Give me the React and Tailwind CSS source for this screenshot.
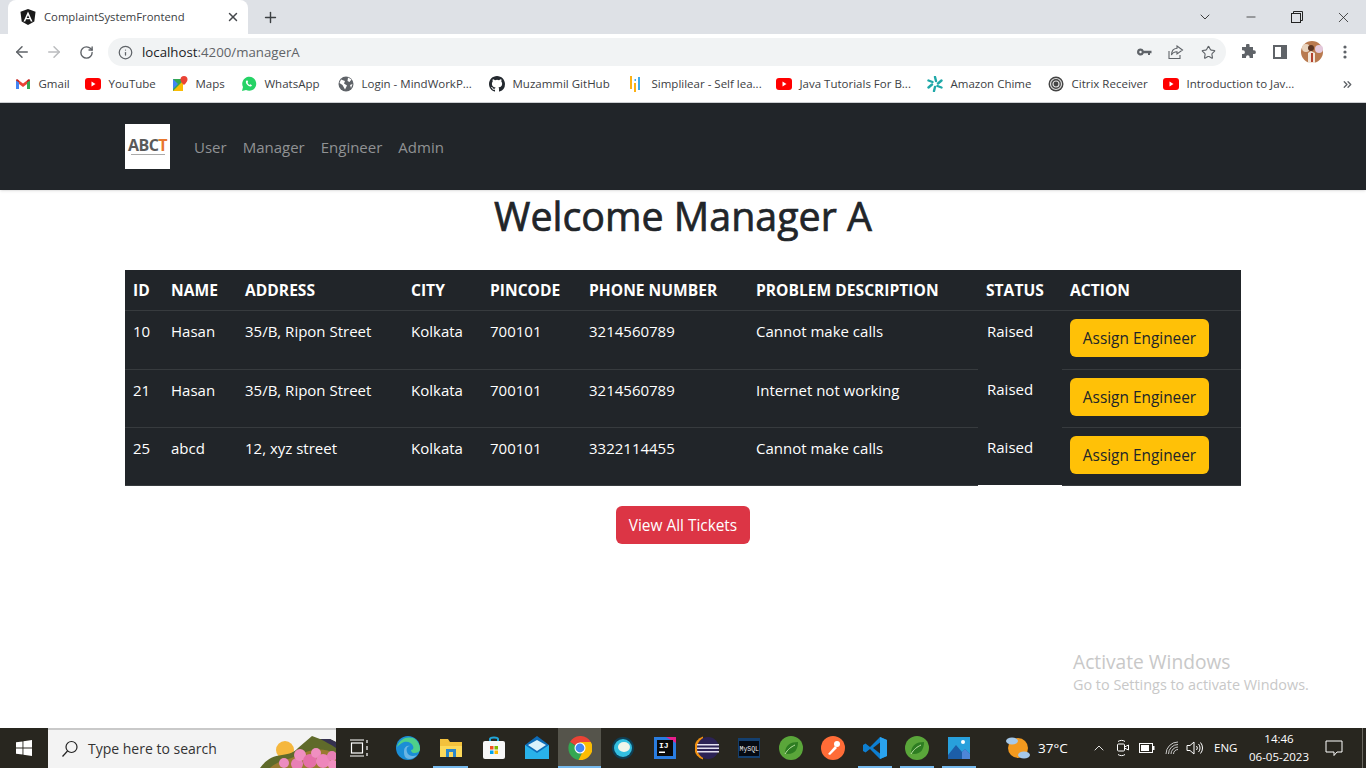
import { ArrowLeft, ArrowRight, RotateCw, Info, Star, X, Plus, ChevronDown, Minus, ChevronUp, ChevronsRight } from "lucide-react";

const font = "font-['Open_Sans',sans-serif]";

function Youtube() {
  return (
    <svg width="16" height="16" viewBox="0 0 16 16">
      <rect y="2" width="16" height="12" rx="3" fill="#f00" />
      <path d="M6.500 5.500v5l4-2.500z" fill="#fff" />
    </svg>
  );
}
function Gmail() {
  return (
    <svg width="16" height="16" viewBox="0 0 16 16">
      <path d="M1 13V4l3 2v7z" fill="#4285f4" />
      <path d="M15 13V4l-3 2v7z" fill="#34a853" />
      <path d="M4 8V4.500l4 3 4-3V8L8 11z" fill="#ea4335" />
      <path d="M1 4.500C1 3 2.500 2.500 4 4.500V6.500zM15 4.500C15 3 13.500 2.500 12 4.500V6.500z" fill="#c5221f" />
    </svg>
  );
}
function Maps() {
  return (
    <svg width="16" height="16" viewBox="0 0 16 16">
      <path d="M1 3h10v12H1z" fill="#34a853" />
      <path d="M1 15 11 5v10z" fill="#fbbc04" />
      <path d="M1 3l5 5-5 5z" fill="#4285f4" />
      <path d="M12 0a3.500 3.500 0 0 0-3.500 3.500C8.500 6 12 9 12 9s3.500-3 3.500-5.500A3.500 3.500 0 0 0 12 0z" fill="#ea4335" />
    </svg>
  );
}
function Whatsapp() {
  return (
    <svg width="16" height="16" viewBox="0 0 16 16">
      <path d="M1 15l1-4a7 7 0 1 1 3 3z" fill="#25d366" />
      <path d="M5.500 4.500c-1 1-.8 2.500.5 4s3 2.500 4.300 1.800l.7-1-1.700-1-.8.700C7.500 8.500 6.800 7.700 6.500 6.800l.7-.8-.7-1.500z" fill="#fff" />
    </svg>
  );
}
function Globe() {
  return (
    <svg width="16" height="16" viewBox="0 0 16 16">
      <circle cx="8" cy="8" r="7.500" fill="#5f6368" />
      <path d="M3 3.500 7 5 6 7.500l3 2-2 4L4.500 9 1.500 7zM10 1.500l3.500 2-2 2.500-2-1zM12 9l2.500-1-1.500 4z" fill="#fff" />
    </svg>
  );
}
function Github() {
  return (
    <svg width="16" height="16" viewBox="0 0 16 16" fill="#24292f">
      <path d="M8 0C3.580 0 0 3.580 0 8c0 3.540 2.290 6.530 5.470 7.590.4.070.55-.17.55-.38 0-.19-.01-.82-.01-1.490-2.010.37-2.530-.49-2.690-.94-.09-.23-.48-.94-.82-1.130-.28-.15-.68-.52-.01-.53.63-.01 1.080.58 1.230.82.720 1.210 1.870.87 2.330.66.070-.52.280-.87.510-1.070-1.780-.2-3.640-.89-3.640-3.950 0-.87.310-1.590.820-2.150-.08-.2-.36-1.020.080-2.120 0 0 .67-.21 2.200.82a7.600 7.600 0 0 1 4 0c1.530-1.040 2.200-.82 2.200-.82.440 1.100.160 1.920.080 2.120.510.560.820 1.270.820 2.150 0 3.070-1.870 3.750-3.650 3.950.290.250.540.730.540 1.480 0 1.070-.01 1.930-.01 2.200 0 .210.150.460.550.380A8.010 8.010 0 0 0 16 8c0-4.420-3.580-8-8-8z" />
    </svg>
  );
}
function Simplilear() {
  return (
    <svg width="16" height="16" viewBox="0 0 16 16">
      <rect x="2" y="0" width="2" height="13" fill="#fbb116" />
      <rect x="6" y="7" width="2" height="9" fill="#fbb116" />
      <rect x="6.500" y="3" width="1.500" height="2" fill="#3ea9e8" />
      <rect x="10" y="1" width="2" height="13" fill="#3ea9e8" />
    </svg>
  );
}
function Chime() {
  return (
    <svg width="16" height="16" viewBox="0 0 16 16" fill="none" stroke="#1fa8a8" strokeWidth="2.400" strokeLinecap="round">
      <path d="M8 1l1 4M8 11l-1 4M1.500 4.500 5.500 6M10.500 10l4 1.500M1.500 11.500 5 8.500M11 7.500l3.500-3" />
    </svg>
  );
}
function Citrix() {
  return (
    <svg width="16" height="16" viewBox="0 0 16 16" fill="none">
      <circle cx="8" cy="8" r="7.500" fill="#444" />
      <circle cx="8" cy="8" r="5.500" stroke="#ddd" strokeWidth="1.200" />
      <circle cx="8" cy="8" r="3" stroke="#ddd" strokeWidth="1.200" />
    </svg>
  );
}

const bookmarks = [
  { label: "Gmail", icon: <Gmail />, w: 70 },
  { label: "YouTube", icon: <Youtube />, w: 87 },
  { label: "Maps", icon: <Maps />, w: 69 },
  { label: "WhatsApp", icon: <Whatsapp />, w: 97 },
  { label: "Login - MindWorkP...", icon: <Globe />, w: 151 },
  { label: "Muzammil GitHub", icon: <Github />, w: 139 },
  { label: "Simplilear - Self lea...", icon: <Simplilear />, w: 148 },
  { label: "Java Tutorials For B...", icon: <Youtube />, w: 151 },
  { label: "Amazon Chime", icon: <Chime />, w: 121 },
  { label: "Citrix Receiver", icon: <Citrix />, w: 115 },
  { label: "Introduction to Jav...", icon: <Youtube />, w: 165 },
];

const tickets = [
  { id: 10, name: "Hasan", address: "35/B, Ripon Street", phone: "3214560789", problem: "Cannot make calls", h: "h-[59px]" },
  { id: 21, name: "Hasan", address: "35/B, Ripon Street", phone: "3214560789", problem: "Internet not working", h: "h-[58px]" },
  { id: 25, name: "abcd", address: "12, xyz street", phone: "3322114455", problem: "Cannot make calls", h: "h-[58px]" },
];

const headers = ["ID", "NAME", "ADDRESS", "CITY", "PINCODE", "PHONE NUMBER", "PROBLEM DESCRIPTION", "STATUS", "ACTION"];
const colWidths = ["w-[38px]", "w-[74px]", "w-[166px]", "w-[79px]", "w-[99px]", "w-[167px]", "w-[230px]", "w-[84px]", "w-[179px]"];

function TabStrip() {
  return (
    <div className="flex h-[34px] items-stretch bg-[#dee1e6] pl-2">
      <div className="flex w-[240px] items-center rounded-t-lg bg-white pl-3 pr-2">
        <svg width="16" height="16" viewBox="0 0 16 16">
          <path d="M8 0 .5 2.700l1.200 9.900L8 16l6.300-3.400 1.200-9.900z" fill="#1a1a1a" />
          <path d="M8 2.500 3.500 12.500h1.700l.9-2.300h3.800l.9 2.300h1.700zM8 6.200l1.300 2.800H6.700z" fill="#fff" />
        </svg>
        <span className="ml-2 flex-1 text-[11.300px] text-[#3c4043]">ComplaintSystemFrontend</span>
        <X size={14} strokeWidth={2.500} className="text-[#45484c]" />
      </div>
      <div className="ml-[14px] flex items-center">
        <Plus size={17} strokeWidth={2} className="text-[#3c4043]" />
      </div>
      <div className="ml-auto flex items-center text-[#222]">
        <div className="flex w-[46px] justify-center"><ChevronDown size={16} strokeWidth={1.300} /></div>
        <div className="flex w-[46px] justify-center"><Minus size={14} strokeWidth={1.300} /></div>
        <div className="flex w-[46px] justify-center">
          <svg width="12" height="12" viewBox="0 0 12 12" fill="none" stroke="#222" strokeWidth="1">
            <rect x=".5" y="2.500" width="9" height="9" />
            <path d="M2.500 2.500V.5h9v9h-2" />
          </svg>
        </div>
        <div className="flex w-[46px] justify-center"><X size={17} strokeWidth={1.100} /></div>
      </div>
    </div>
  );
}

function Toolbar() {
  return (
    <div className="flex h-[32px] items-end bg-white">
      <div className="flex h-[28px] w-[108px] items-center pl-[6px] text-[#5f6368]">
        <div className="flex w-[32px] justify-center"><ArrowLeft size={18} strokeWidth={2} /></div>
        <div className="flex w-[32px] justify-center text-[#babcbe]"><ArrowRight size={18} strokeWidth={2} /></div>
        <div className="flex w-[32px] justify-center"><RotateCw size={15} strokeWidth={2.200} /></div>
      </div>
      <div className="flex h-[28px] w-[1118px] items-center rounded-full bg-[#f1f3f4] pl-[10px] pr-[2px]">
        <Info size={15} strokeWidth={2} className="text-[#5f6368]" />
        <span className="ml-[9px] flex-1 pt-px text-[13.250px] text-[#5f6368]"><span className="text-[#202124]">localhost</span>:4200/managerA</span>
        <div className="flex items-center text-[#5f6368]">
          <div className="flex w-[32px] justify-center">
            <svg width="16" height="16" viewBox="0 0 16 16" fill="#5f6368">
              <path d="M4.500 4.500a3.500 3.500 0 0 1 3.300 2.300H15.500v2.500H14v1.800h-2V9.300H7.800a3.500 3.500 0 1 1-3.300-4.800zm0 2.300a1.200 1.200 0 1 0 0 2.400 1.200 1.200 0 0 0 0-2.400z" />
            </svg>
          </div>
          <div className="flex w-[32px] justify-center">
            <svg width="16" height="16" viewBox="0 0 16 16" fill="none" stroke="#5f6368" strokeWidth="1.100">
              <path d="M1 7v7.500h11V11M9 2l5.500 4L9 10V7.800C6.500 7.800 4.500 8.800 3.500 11c0-4 2-6.500 5.500-6.800z" />
            </svg>
          </div>
          <div className="flex w-[32px] justify-center"><Star size={15} strokeWidth={1.800} /></div>
        </div>
      </div>
      <div className="flex h-[28px] flex-1 items-center pl-[6px]">
        <div className="flex w-[32px] justify-center">
          <svg width="16" height="16" viewBox="0 0 16 16" fill="#5f6368">
            <path d="M6 1.500a1.800 1.800 0 0 1 3.600 0V3h3.400v3.300h1a1.900 1.900 0 0 1 0 3.800h-1V14H9.600v-1a1.800 1.800 0 0 0-3.600 0v1H2v-3.900h1a1.900 1.900 0 0 0 0-3.800H2V3h4z" />
          </svg>
        </div>
        <div className="flex w-[32px] justify-center">
          <svg width="14" height="14" viewBox="0 0 14 14" fill="none">
            <rect x="1" y="1" width="12" height="12" stroke="#5f6368" strokeWidth="2" />
            <rect x="8" y="1" width="5" height="12" fill="#5f6368" />
          </svg>
        </div>
        <div className="flex w-[32px] justify-center">
          <svg width="22" height="22" viewBox="0 0 22 22">
            <circle cx="11" cy="11" r="11" fill="#b97a4f" />
            <circle cx="5" cy="7" r="4" fill="#e9d3bd" />
            <circle cx="18" cy="8" r="4" fill="#e4c9dc" />
            <circle cx="10" cy="7" r="3" fill="#5b3522" />
            <path d="M7 22V12l3-2 4 2v10z" fill="#f1e6da" />
            <path d="M10 12h2v9h-2z" fill="#b5432f" />
          </svg>
        </div>
        <div className="flex w-[34px] justify-center">
          <svg width="4" height="14" viewBox="0 0 4 14" fill="#5f6368">
            <circle cx="2" cy="2" r="1.600" /><circle cx="2" cy="7" r="1.600" /><circle cx="2" cy="12" r="1.600" />
          </svg>
        </div>
      </div>
    </div>
  );
}

function BookmarkBar() {
  return (
    <div className="flex h-[37px] items-center border-b border-[#d0d2d5] bg-white pl-[15px]">
      {bookmarks.map((b) => (
        <div key={b.label} style={{ width: b.w }} className="flex shrink-0 items-center gap-[7.500px]">
          <span className="flex w-[16px] justify-center">{b.icon}</span>
          <span className="whitespace-nowrap text-[11.500px] text-[#3c4043]">{b.label}</span>
        </div>
      ))}
      <ChevronsRight size={13} strokeWidth={2.500} className="ml-[13px] text-[#5f6368]" />
    </div>
  );
}

function Navbar() {
  return (
    <nav className="flex h-[87px] items-center bg-[#212529] pl-[125px] shadow-sm">
      <div className="flex h-[45px] w-[45px] flex-col items-center justify-center bg-white">
        <span className="text-[16px] font-bold leading-[15px] tracking-[-0.5px] text-[#5a5a5a]">ABC<span className="text-[#e8772e]">T</span></span>
        <span className="mt-[1px] h-px w-[34px] bg-[#aaa]" />
      </div>
      <div className="ml-[24px] flex gap-4 pt-px text-[15px] text-[#909294]">
        <a>User</a>
        <a>Manager</a>
        <a>Engineer</a>
        <a>Admin</a>
      </div>
    </nav>
  );
}

function TicketTable() {
  return (
    <table className="ml-[125px] mt-[30px] w-[1116px] table-fixed border-separate border-spacing-0 text-left text-[15px] leading-[24px] text-white">
      <colgroup>
        {colWidths.map((w) => <col key={w} className={w} />)}
      </colgroup>
      <thead>
        <tr className="h-[41px] bg-[#212529]">
          {headers.map((h) => (
            <th key={h} className="whitespace-nowrap border-b border-[#373b3e] px-2 text-[15.600px] font-bold">{h}</th>
          ))}
        </tr>
      </thead>
      <tbody>
        {tickets.map((t, i) => (
          <tr key={t.id} className={t.h}>
            {[t.id, t.name, t.address, "Kolkata", "700101", t.phone, t.problem].map((v, j) => (
              <td key={j} className="whitespace-nowrap border-b border-[#373b3e] bg-[#212529] px-2 pb-[18px] pt-2 align-top">{v}</td>
            ))}
            <td className={`${i === 2 ? "border-b border-white" : ""} ${i === 0 ? "pt-2" : "pt-[7px]"} bg-[#212529] pl-[9px] align-top`}>Raised</td>
            <td className="border-b border-[#373b3e] bg-[#212529] px-2 pt-2 align-top">
              <button className="h-[38px] w-[139px] whitespace-nowrap rounded-md bg-[#ffc107] pt-px text-[15.400px] text-[#212529]">Assign Engineer</button>
            </td>
          </tr>
        ))}
      </tbody>
    </table>
  );
}

function TaskIcon({ children, active, running, w = "w-[42px]" }) {
  return (
    <div className={`relative flex shrink-0 items-center justify-center ${w} ${active ? "bg-[#55544b]" : ""}`}>
      {children}
      {active && <span className="absolute inset-x-0 bottom-0 h-[2px] bg-[#76b9ed]" />}
      {running && <span className="absolute inset-x-[4px] bottom-0 h-[2px] bg-[#76b9ed]" />}
    </div>
  );
}

function Spring() {
  return (
    <svg width="24" height="24" viewBox="0 0 24 24">
      <circle cx="12" cy="12" r="12" fill="#5aa63a" />
      <path d="M6 17C6 9 12 6 19 6c0 7-3 12-10 12-1 0-2-.5-3-1z" fill="#2e7d22" />
      <path d="M6 18C9 13 12 11 16 9" stroke="#bfe3a6" strokeWidth="1" fill="none" />
    </svg>
  );
}

function Taskbar() {
  return (
    <div className="flex h-[40px] items-stretch bg-[#28261f]">
      <div className="flex w-[48px] shrink-0 items-center justify-center">
        <svg width="16" height="16" viewBox="0 0 16 16" fill="#fff">
          <path d="M0 2.300 6.500 1.400V7.500H0zM7.400 1.300 16 0v7.500H7.400zM0 8.400h6.500v6.200L0 13.700zM7.400 8.400H16V16l-8.600-1.300z" />
        </svg>
      </div>
      <div className="flex w-[288px] shrink-0 items-center overflow-hidden border-t-2 border-[#c9c9c9] bg-[#f3f3f3] pl-[13px]">
        <svg width="18" height="18" viewBox="0 0 18 18" fill="none" stroke="#222" strokeWidth="1.200">
          <circle cx="10.500" cy="7" r="5.500" />
          <path d="M6.500 11 1.500 16.500" />
        </svg>
        <span className="ml-[9px] w-[172px] shrink-0 whitespace-nowrap text-sm text-[#333]">Type here to search</span>
        <svg width="76" height="38" viewBox="0 0 76 38" className="shrink-0">
          <circle cx="25" cy="20" r="9" fill="#f5b73d" />
          <path d="M0 38C6 30 12 26 22 25 30 24 34 22 38 18L52 6 60 9 70 9 76 12V38z" fill="#5f6a2a" />
          <path d="M60 9 70 9 76 12V18C70 14 66 12 60 9z" fill="#353150" />
          <path d="M10 38C18 30 30 30 40 24 50 20 62 16 76 24V38z" fill="#9a7a30" />
          <circle cx="24" cy="33" r="5" fill="#ec8cc0" /><circle cx="37" cy="34" r="6" fill="#e87fb5" />
          <circle cx="40" cy="25" r="6" fill="#f08fc0" /><circle cx="50" cy="31" r="7" fill="#e56fa8" />
          <circle cx="56" cy="23" r="5" fill="#f08fc0" /><circle cx="63" cy="31" r="7" fill="#ee86bc" />
          <circle cx="72" cy="26" r="5" fill="#e87fb5" /><circle cx="73" cy="35" r="5" fill="#f08fc0" />
        </svg>
      </div>
      <div className="flex shrink-0">
        <TaskIcon w="w-[48px]">
          <svg width="20" height="18" viewBox="0 0 20 18" fill="none" stroke="#fff" strokeWidth="1.200">
            <rect x="1.500" y="4" width="11" height="10" />
            <path d="M0 1h14M0 17h14M17 1v3M17 7v4M17 14v3" />
          </svg>
        </TaskIcon>
        <div className="w-[3px]" />
        <TaskIcon>
          <svg width="24" height="24" viewBox="0 0 24 24">
            <circle cx="12" cy="12" r="12" fill="#1b8ed6" />
            <path d="M1 11C3 3 11 0 17 2c4 2 7 6 7 11 0 3-3 4-6 4-2 0-3-2-3-3 2 0 3-2 2-4-1-3-5-5-9-4-3 1-5 3-7 5z" fill="#4fd08a" />
            <path d="M8 15c0-4 3-6 6-5-3 0-4 3-3 6 1 4 6 5 10 3-3 4-8 5-11 3-2-2-2-4-2-7z" fill="#fff" opacity=".35" />
          </svg>
        </TaskIcon>
        <TaskIcon running w="w-[43px]">
          <svg width="24" height="22" viewBox="0 0 24 22">
            <path d="M1 2h8l2 3h12v15H1z" fill="#f3c13d" />
            <path d="M1 9h22v11H1z" fill="#fcd95a" />
            <path d="M7 12h10v8H7z" fill="#2b87c9" />
            <path d="M10 15h4v5h-4z" fill="#fcd95a" />
          </svg>
        </TaskIcon>
        <TaskIcon w="w-[43px]">
          <svg width="24" height="24" viewBox="0 0 24 24">
            <path d="M8 6V3c0-2 8-2 8 0v3" fill="none" stroke="#21a6d9" strokeWidth="2" />
            <rect x="1" y="5" width="22" height="18" rx="2" fill="#f7f7f7" />
            <path d="M8 10h3.500v3.500H8z" fill="#f25022" /><path d="M12.500 10H16v3.500h-3.500z" fill="#7fba00" />
            <path d="M8 14.500h3.500V18H8z" fill="#00a4ef" /><path d="M12.500 14.500H16V18h-3.500z" fill="#ffb900" />
          </svg>
        </TaskIcon>
        <TaskIcon w="w-[43px]">
          <svg width="24" height="24" viewBox="0 0 24 24">
            <path d="M0 9 12 0l12 9v14H0z" fill="#0e6cb8" />
            <path d="M0 9l12 8 12-8v14H0z" fill="#29b2ea" />
            <path d="M3 9l9-5 9 5-9 6z" fill="#d9f1fb" />
          </svg>
        </TaskIcon>
        <TaskIcon active w="w-[43px]">
          <svg width="24" height="24" viewBox="0 0 24 24">
            <path d="M12 12 2 6a12 12 0 0 1 20.800 0H12z" fill="#ea4335" />
            <path d="M2 6a12 12 0 0 0 8.500 17.900L15 15z" fill="#34a853" />
            <path d="M22.800 6H12l3 9-4.500 8.900A12 12 0 0 0 22.800 6z" fill="#fbbc04" />
            <circle cx="12" cy="12" r="5.500" fill="#fff" />
            <circle cx="12" cy="12" r="4.400" fill="#4285f4" />
          </svg>
        </TaskIcon>
        <div className="w-px" />
        <TaskIcon>
          <svg width="22" height="22" viewBox="0 0 22 22">
            <circle cx="11" cy="11" r="11" fill="#0e3f55" />
            <circle cx="11" cy="11" r="9" fill="#33bfe0" />
            <ellipse cx="12" cy="10" rx="6" ry="5" fill="#f0f6ea" />
          </svg>
        </TaskIcon>
        <TaskIcon>
          <svg width="22" height="22" viewBox="0 0 22 22">
            <rect width="22" height="22" fill="#2a7de1" />
            <path d="M0 0h22v6L12 0z" fill="#e91e8c" />
            <rect x="3" y="3" width="16" height="16" fill="#0a0a0a" />
            <rect x="5" y="14.500" width="6" height="1.500" fill="#fff" />
            <text x="5" y="11" fill="#fff" fontSize="8" fontWeight="700" fontFamily="Liberation Mono, monospace">IJ</text>
          </svg>
        </TaskIcon>
        <TaskIcon>
          <svg width="24" height="24" viewBox="0 0 24 24">
            <path d="M8 .5a12 12 0 0 0 0 23z" fill="#f29111" />
            <circle cx="13" cy="12" r="11" fill="#2c2255" />
            <path d="M2 8h22v1.500H2zM2 11.500h22v1.500H2zM2 15h22v1.500H2z" fill="#e4e0f0" />
          </svg>
        </TaskIcon>
        <TaskIcon>
          <svg width="22" height="20" viewBox="0 0 22 20">
            <rect width="22" height="20" fill="#143f6e" />
            <rect x="1" y="3" width="20" height="15" fill="#050a12" />
            <text x="1.500" y="13" fill="#eee" fontSize="6.500" fontFamily="Liberation Mono, monospace">MySQL</text>
          </svg>
        </TaskIcon>
        <TaskIcon>
          <Spring />
        </TaskIcon>
        <TaskIcon>
          <svg width="24" height="24" viewBox="0 0 24 24">
            <circle cx="12" cy="12" r="12" fill="#ff6c37" />
            <path d="M7 18l7-8 2 2-7 7z" fill="#fff" />
            <circle cx="16" cy="8" r="3" fill="#fff" />
          </svg>
        </TaskIcon>
        <TaskIcon running>
          <svg width="24" height="24" viewBox="0 0 24 24">
            <path d="M17 1 7 11 2.500 7.500 0 9v6l2.500 1.500L7 13l10 10 7-3V4z" fill="#0e7fd1" />
            <path d="M17 6.500v11L10 12z" fill="#28261f" />
            <path d="M17 1l7 3v16l-7 3z" fill="#2aa3ef" />
          </svg>
        </TaskIcon>
        <TaskIcon running>
          <Spring />
        </TaskIcon>
        <TaskIcon running>
          <svg width="22" height="22" viewBox="0 0 22 22">
            <rect width="22" height="22" fill="#28a0dc" />
            <circle cx="15" cy="5" r="2" fill="#fff" />
            <path d="M0 18l8-10 6 7 3-3 5 5v5H0z" fill="#1c5ea8" />
            <path d="M14 15l3-3 5 5v5h-8z" fill="#4d86d8" />
          </svg>
        </TaskIcon>
      </div>
      <div className="ml-[26px] flex shrink-0 items-center">
        <svg width="24" height="24" viewBox="0 0 24 24">
          <circle cx="12" cy="12" r="10" fill="#f39a1f" />
          <ellipse cx="6" cy="5" rx="6" ry="3.500" fill="#a6c9ea" />
          <ellipse cx="18" cy="19" rx="6" ry="3.500" fill="#a6c9ea" />
        </svg>
        <span className="ml-2 w-[53px] text-[13.500px] text-white">37°C</span>
        <ChevronUp size={16} strokeWidth={1.300} className="text-white" />
        <div className="ml-[4px] flex w-[24px] justify-center">
          <svg width="14" height="18" viewBox="0 0 14 18" fill="none" stroke="#fff" strokeWidth="1">
            <rect x="1.500" y="5" width="7" height="7" rx="1" />
            <path d="M8.500 8l4-2v5l-4-2M2 2.500C4 1 7 1 9 2.500M2 15.500c2 1.500 5 1.500 7 0" />
          </svg>
        </div>
        <div className="flex w-[24px] justify-center">
          <svg width="16" height="10" viewBox="0 0 16 10" fill="none">
            <rect x=".5" y=".5" width="13" height="9" stroke="#fff" />
            <rect x="2" y="2" width="8" height="6" fill="#fff" />
            <rect x="14" y="3" width="1.500" height="4" fill="#fff" />
          </svg>
        </div>
        <div className="flex w-[25px] justify-center">
          <svg width="14" height="14" viewBox="0 0 14 14" fill="none" stroke="#ddd" strokeWidth=".9">
            <path d="M1 13A12 12 0 0 1 13 1M3.500 13A9.500 9.500 0 0 1 13 3.500M6 13a7 7 0 0 1 7-7M8.500 13A4.500 4.500 0 0 1 13 8.500" />
          </svg>
        </div>
        <div className="flex w-[22px] justify-center">
          <svg width="18" height="14" viewBox="0 0 18 14" fill="none" stroke="#fff" strokeWidth="1">
            <path d="M1 4.500h3L8 1v12L4 9.500H1zM10.500 5a3 3 0 0 1 0 4M12.500 3a6 6 0 0 1 0 8M14.500 1.500a8.500 8.500 0 0 1 0 11" />
          </svg>
        </div>
        <span className="ml-[8px] w-[24px] text-[11.500px] text-white">ENG</span>
        <div className="ml-[7px] flex w-[68px] flex-col items-center text-[11.500px] leading-[18px] text-white">
          <span>14:46</span>
          <span>06-05-2023</span>
        </div>
        <div className="ml-[12px] flex w-[18px] justify-center">
          <svg width="18" height="17" viewBox="0 0 18 17" fill="none" stroke="#fff" strokeWidth="1">
            <path d="M1 1h16v11h-5l-3 3.500V12H1z" />
          </svg>
        </div>
        <div className="ml-[19px] h-full w-px bg-[#6a6860]" />
      </div>
    </div>
  );
}

export default function App() {
  return (
    <div className={`relative flex h-[768px] flex-col overflow-hidden bg-white ${font}`}>
      <TabStrip />
      <Toolbar />
      <BookmarkBar />
      <Navbar />
      <main className="flex-1 text-[#212529]">
        <h1 className="mt-[2px] text-center text-[39.400px] font-medium leading-[48px] [-webkit-text-stroke:0.7px_#212529]">Welcome Manager A</h1>
        <TicketTable />
        <div className="mt-[20px] flex justify-center">
          <button className="h-[38px] w-[134px] whitespace-nowrap rounded-md bg-[#dc3545] pt-px text-[15.400px] text-white">View All Tickets</button>
        </div>
      </main>
      <Taskbar />
      <div className="absolute left-[1073px] top-[649px] text-[#c8c8c8]">
        <div className="text-[19.200px] leading-[26px]">Activate Windows</div>
        <div className="text-[14.400px] leading-[20px]">Go to Settings to activate Windows.</div>
      </div>
    </div>
  );
}
